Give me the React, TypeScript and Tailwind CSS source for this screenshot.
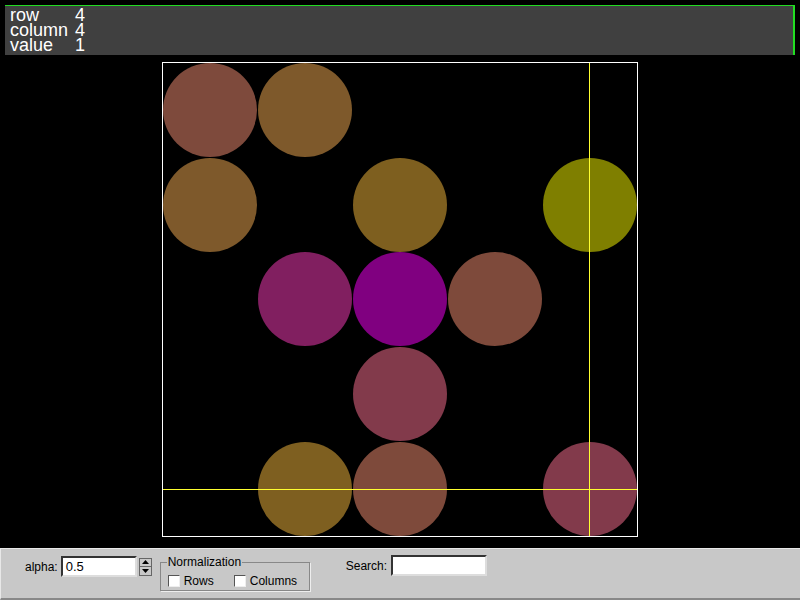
import React from 'react';

// cells of the 5x5 matrix that hold a value, with their blended colour
const cells = [
  { r: 0, c: 0, fill: '#7e4a3c' },
  { r: 0, c: 1, fill: '#7e592b' },
  { r: 1, c: 0, fill: '#7e592b' },
  { r: 1, c: 2, fill: '#7e5f1f' },
  { r: 1, c: 4, fill: '#7f7f00' },
  { r: 2, c: 1, fill: '#811f60' },
  { r: 2, c: 2, fill: '#800080' },
  { r: 2, c: 3, fill: '#7e4a3b' },
  { r: 3, c: 2, fill: '#823a4b' },
  { r: 4, c: 1, fill: '#7e5f20' },
  { r: 4, c: 2, fill: '#7e4a3b' },
  { r: 4, c: 4, fill: '#823a4b' },
];

const Plot = () => {
  const cell = 95;
  return (
    <svg width={476} height={475} className="block">
      <rect x={0} y={0} width={476} height={475} fill="#000" />
      {cells.map((d, i) => (
        <circle
          key={i}
          cx={48 + d.c * cell}
          cy={48 + d.r * cell - (d.r > 1 ? 1 : 0)}
          r={47}
          fill={d.fill}
        />
      ))}
      {/* crosshair */}
      <line x1={427.5} y1={0} x2={427.5} y2={475} stroke="#ffff30" strokeWidth={1} />
      <line x1={0} y1={427.5} x2={476} y2={427.5} stroke="#ffff30" strokeWidth={1} />
      <rect x={0.5} y={0.5} width={475} height={474} fill="none" stroke="#fff" strokeWidth={1} />
    </svg>
  );
};

const Checkbox = ({ label }: { label: string }) => (
  <label className="flex items-center gap-[4px]">
    <span className="w-[12px] h-[12px] bg-white border border-t-[#555] border-l-[#555] border-b-[#eee] border-r-[#eee]" />
    <span>{label}</span>
  </label>
);

export default function App() {
  return (
    <div
      className="w-[800px] h-[600px] bg-black flex flex-col overflow-hidden"
      style={{ fontFamily: '"Liberation Sans", Arial, sans-serif' }}
    >
      {/* info bar */}
      <div className="mx-[5px] mt-[5px] h-[50px] bg-[#404040] border-t border-r-2 border-[#22dd22] text-white text-[18px] leading-[15px] pl-[5px] pt-[2px]">
        <div className="grid grid-cols-[65px_auto] w-fit">
          <span>row</span>
          <span>4</span>
          <span>column</span>
          <span>4</span>
          <span>value</span>
          <span>1</span>
        </div>
      </div>

      {/* plot area */}
      <div className="flex-1 flex justify-center pt-[7px]">
        <Plot />
      </div>

      {/* controls */}
      <div className="h-[52px] bg-[#c8c8c8] border-t border-l border-t-[#e8e8e8] border-l-[#e8e8e8] border-b-2 border-b-[#888] text-[12px] text-black flex items-start">
        <div className="flex items-center ml-[24px] mt-[7px]">
          <span className="mr-[3px]">alpha:</span>
          <div className="w-[76px] h-[21px] bg-white border-2 border-t-[#333] border-l-[#333] border-b-[#ddd] border-r-[#ddd] px-[3px] text-[13px] leading-[17px]">
            0.5
          </div>
          <div className="ml-[2px] w-[13px] h-[18px] flex flex-col border border-[#666] bg-[#c8c8c8]">
            <div className="flex-1 flex items-center justify-center border-b border-[#666]">
              <svg width="7" height="4"><path d="M0 4 L3.5 0 L7 4 Z" fill="#000" /></svg>
            </div>
            <div className="flex-1 flex items-center justify-center">
              <svg width="7" height="4"><path d="M0 0 L3.5 4 L7 0 Z" fill="#000" /></svg>
            </div>
          </div>
        </div>

        <fieldset className="ml-[8px] mt-[7px] w-[150px] h-[35px] border border-[#888] shadow-[1px_1px_0_#eee] pl-[7px] pr-[4px]">
          <legend className="px-[1px] ml-[-1px] leading-[12px] text-[12px]">Normalization</legend>
          <div className="flex gap-[20px] mt-[4px]">
            <Checkbox label="Rows" />
            <Checkbox label="Columns" />
          </div>
        </fieldset>

        <div className="flex items-center ml-[36px] mt-[6px]">
          <span className="mr-[4px]">Search:</span>
          <div className="w-[96px] h-[21px] bg-white border-2 border-t-[#333] border-l-[#333] border-b-[#ddd] border-r-[#ddd]" />
        </div>
      </div>
    </div>
  );
}
